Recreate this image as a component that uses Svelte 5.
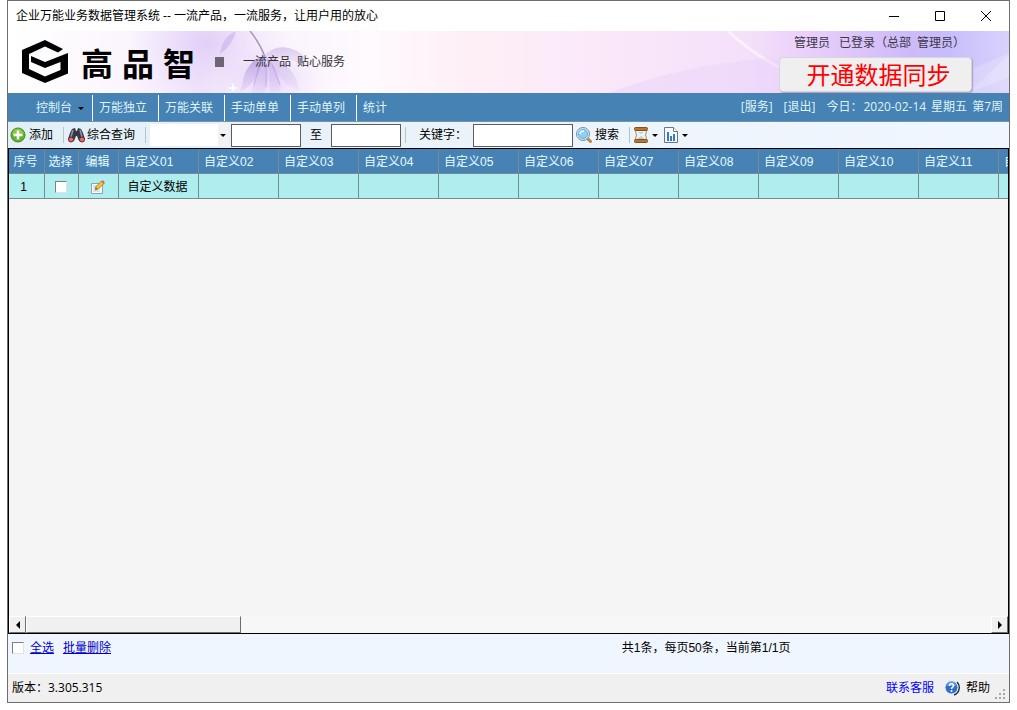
<script lang="ts">
  interface MenuItem {
    label: string;
    dropdown?: boolean;
  }

  const menu: MenuItem[] = [
    { label: '控制台', dropdown: true },
    { label: '万能独立' },
    { label: '万能关联' },
    { label: '手动单单' },
    { label: '手动单列' },
    { label: '统计' }
  ];

  const fields = Array.from({ length: 12 }, (_, i) => '自定义' + String(i + 1).padStart(2, '0'));

  let rows = $state([{ id: 1, checked: false, values: ['自定义数据'] }]);
  let from = $state('');
  let to = $state('');
  let keyword = $state('');

  let allChecked = $derived(rows.every((r) => r.checked));

  function toggleAll() {
    const next = !allChecked;
    rows.forEach((r) => (r.checked = next));
  }
</script>

<div class="window">
  <header class="titlebar">
    <span class="title">企业万能业务数据管理系统 -- 一流产品，一流服务，让用户用的放心</span>
    <div class="controls">
      <button aria-label="最小化">
        <svg width="12" height="12" viewBox="0 0 12 12"><path d="M1 6.500h10" /></svg>
      </button>
      <button aria-label="最大化">
        <svg width="12" height="12" viewBox="0 0 12 12"><path d="M1.500 1.500h9v9h-9z" /></svg>
      </button>
      <button aria-label="关闭">
        <svg width="12" height="12" viewBox="0 0 12 12"><path d="M1 1l10 10M11 1L1 11" /></svg>
      </button>
    </div>
  </header>

  <div class="banner">
    <svg class="art" viewBox="0 0 1001 62" preserveAspectRatio="xMinYMin slice" aria-hidden="true">
      <defs>
        <linearGradient id="petal" x1="0" y1="0" x2="0" y2="1">
          <stop offset="0" stop-color="#a88adb" stop-opacity="0.75" />
          <stop offset="1" stop-color="#dcc8f4" stop-opacity="0.4" />
        </linearGradient>
        <radialGradient id="glow">
          <stop offset="0" stop-color="#d8c0f4" stop-opacity="0.6" />
          <stop offset="1" stop-color="#e8d8fa" stop-opacity="0" />
        </radialGradient>
      </defs>
      <ellipse cx="200" cy="12" rx="80" ry="60" fill="url(#glow)" />
      <ellipse cx="262" cy="48" rx="56" ry="36" fill="url(#glow)" />
      <path d="M228 0q-14 6-16 23q12-8 16-23z" fill="#cdb6ee" opacity="0.7" />
      <path d="M242 0q10 12 15 26" fill="none" stroke="#a995bd" stroke-width="1.500" />
      <path d="M255 26q14-16 34-6q14 8 6 16q-12-12-40-10z" fill="url(#petal)" opacity="0.5" />
      <path d="M256 25q-14 3-20 20q-2 10-4 16q12-6 18-18z" fill="url(#petal)" />
      <path d="M256 25q-10 18-12 37h12q8-20 0-37z" fill="url(#petal)" opacity="0.8" />
      <path d="M258 26q14 12 15 34l-11 2q0-18-4-36z" fill="url(#petal)" opacity="0.7" />
      <path d="M260 26q26 6 32 34q-20-6-32-34z" fill="url(#petal)" opacity="0.5" />
      <path d="M252 34l-6 20M258 34v22M264 34l8 20" stroke="#a88ad0" stroke-width="0.800" opacity="0.5" />
      <path d="M225 51l1 5l5 1l-5 1l-1 4l-1-4l-5-1l5-1z" fill="#fff" />
      <path d="M720 0q30 28 64 42" stroke="#fff" stroke-width="3" fill="none" opacity="0.55" />
      <path d="M600 62q80-30 175-36v36z" fill="#ead4fa" opacity="0.5" />
      <path d="M937 50l64-28v40h-90z" fill="#fff" opacity="0.2" />
      <path d="M960 62l41-16v-22z" fill="#fff" opacity="0.2" />
    </svg>
    <svg class="logo" width="48" height="46" viewBox="0 0 48 46" role="img" aria-label="高品智">
      <path
        d="M24 1L42 10L37 13.500L24 7.500L8 15v15l16 7.500l15.500-6.500v-8L24 29L10 23v-6l14 6l23-9v20.500L24 44L1 34V11z"
        fill="#000"
      />
    </svg>
    <strong class="brand"><span>高</span><span>品</span><span>智</span></strong>
    <span class="square"></span>
    <span class="slogan">一流产品&ensp;贴心服务</span>
    <div class="account">
      <span class="login">管理员&ensp; 已登录（总部&ensp;管理员）</span>
      <button class="sync">开通数据同步</button>
    </div>
  </div>

  <nav class="menu">
    {#each menu as item}
      <button class="menu-item">
        {item.label}{#if item.dropdown}<i class="caret"></i>{/if}
      </button>
    {/each}
    <div class="session">
      <a href="#service">[服务]</a>
      <a href="#logout">[退出]</a>
      <span class="today">
        <span>今日：</span>
        <span>2020-02-14</span>
        <span>星期五</span>
        <span>第7周</span>
      </span>
    </div>
  </nav>

  <div class="toolbar">
    <button class="tool">
      <svg width="16" height="16" viewBox="0 0 16 16">
        <circle cx="8" cy="8" r="7" fill="#62b32b" stroke="#3f8a1c" />
        <path d="M2.500 7a5.500 5.500 0 0 1 11 0z" fill="#9ad25c" opacity="0.7" />
        <path d="M8 3.500v9M3.500 8h9" stroke="#fff" stroke-width="2.500" />
      </svg>
      添加
    </button>
    <span class="sep"></span>
    <button class="tool binoculars">
      <svg width="17" height="16" viewBox="0 0 17 16">
        <path d="M4 2l3-1l1 3h1l1-3l3 1l2 4l2 6q-1 4-6 2L9 9H8l-2 5q-5 2-6-2l2-6z" fill="#343946" />
        <path d="M5 3L3 10M12 3l2 7" stroke="#8d96aa" stroke-width="1.500" />
        <ellipse cx="3" cy="12.500" rx="2.500" ry="2.500" fill="#e0716a" stroke="#6b2422" />
        <ellipse cx="14" cy="12.500" rx="2.500" ry="2.500" fill="#e0716a" stroke="#6b2422" />
      </svg>
      综合查询
    </button>
    <span class="sep"></span>
    <div class="combo">
      <select aria-label="查询字段"><option></option></select>
      <i class="caret"></i>
    </div>
    <input class="range" type="text" aria-label="起始" bind:value={from} />
    <label class="to" for="range-to">至</label>
    <input class="range" id="range-to" type="text" bind:value={to} />
    <span class="sep"></span>
    <label class="kw" for="keyword">关键字：</label>
    <input class="keyword" id="keyword" type="text" bind:value={keyword} />
    <button class="tool search">
      <svg width="16" height="16" viewBox="0 0 16 16">
        <path d="M12 12l2.500 2.500" stroke="#b98a3c" stroke-width="3" stroke-linecap="round" />
        <circle cx="7" cy="7" r="6.500" fill="#c9e9f9" stroke="#6f8fb0" />
        <circle cx="7" cy="7" r="4.500" fill="#8fd0f2" stroke="#6fa9d2" />
        <path d="M4 7q0-3 4-3" stroke="#fff" stroke-width="1.500" fill="none" />
      </svg>
      搜索
    </button>
    <span class="sep"></span>
    <button class="tool drop" aria-label="历史">
      <svg width="14" height="16" viewBox="0 0 14 16">
        <path d="M1.500 3q0 3 1 5q-1 2-1 5h11q0-3-1-5q1-2 1-5z" fill="#eef2f8" stroke="#b98b50" />
        <path d="M3 12l4-3l4 3zM4 5h6L7 7z" fill="#b9cbe2" />
        <rect x="0.500" y="0.500" width="13" height="3" rx="1" fill="#b5772e" stroke="#875017" />
        <rect x="0.500" y="12.500" width="13" height="3" rx="1" fill="#b5772e" stroke="#875017" />
      </svg>
      <i class="caret"></i>
    </button>
    <button class="tool drop" aria-label="报表">
      <svg width="14" height="16" viewBox="0 0 14 16">
        <path d="M0.500 0.500h9l4 4v11h-13z" fill="#f4f8fd" stroke="#6d7683" />
        <path d="M9.500 0.500v4h4" fill="#fff" stroke="#6d7683" />
        <path d="M3 5h2v9H3zM6 9h2v5H6zM9 7h2v7H9z" fill="#3b78c4" />
      </svg>
      <i class="caret"></i>
    </button>
  </div>

  <main class="grid">
    <div class="viewport">
      <table>
        <thead>
          <tr>
            <th class="no">序号</th>
            <th class="pick">选择</th>
            <th class="edit">编辑</th>
            {#each fields as field}
              <th class="field">{field}</th>
            {/each}
          </tr>
        </thead>
        <tbody>
          {#each rows as row}
            <tr>
              <td class="num">{row.id}</td>
              <td><input type="checkbox" aria-label="选择第{row.id}行" bind:checked={row.checked} /></td>
              <td>
                <button class="tool pencil" aria-label="编辑">
                  <svg width="14" height="14" viewBox="0 0 14 14">
                    <path d="M0.500 3.500h11v10h-11z" fill="#fff" stroke="#86a6b8" />
                    <path d="M2 6h5M2 8h3M2 11h7" stroke="#b8c8d4" />
                    <path d="M4 10l1-3.500L10.500 1l2.500 2.500L7.500 9z" fill="#f4c13a" stroke="#a5762b" stroke-width="0.800" />
                    <path d="M10 1.500l1-1h1.500L13.500 2v1l-1 1z" fill="#e0685c" />
                    <path d="M5 7l2 2l-3 1z" fill="#5c9a3c" />
                  </svg>
                </button>
              </td>
              {#each fields as _, i}
                <td>{row.values[i] ?? ''}</td>
              {/each}
            </tr>
          {/each}
        </tbody>
      </table>
    </div>
    <div class="scrollbar">
      <button class="arrow" aria-label="向左">
        <svg width="4" height="8" viewBox="0 0 4 8"><path d="M4 0v8L0 4z" /></svg>
      </button>
      <div class="thumb"></div>
      <button class="arrow right" aria-label="向右">
        <svg width="4" height="8" viewBox="0 0 4 8"><path d="M0 0v8l4-4z" /></svg>
      </button>
    </div>
  </main>

  <div class="pager">
    <div class="bulk">
      <input id="all" type="checkbox" checked={allChecked} onchange={toggleAll} />
      <label for="all">全选</label>
      <a href="#delete">批量删除</a>
    </div>
    <span class="summary">共1条，每页50条，当前第1/1页</span>
  </div>

  <footer class="status">
    <span>版本：3.305.315</span>
    <div class="support">
      <a href="#contact">联系客服</a>
      <button class="tool help">
        <svg width="16" height="16" viewBox="0 0 16 16">
          <path d="M13 2a8 8 0 0 1-3 13" stroke="#222b3c" stroke-width="1.500" fill="none" />
          <circle cx="7.500" cy="7.500" r="6.500" fill="#2f6fc9" stroke="#dfe8f5" />
          <path d="M2.500 6a5 5 0 0 1 10 0z" fill="#7eb0ee" opacity="0.6" />
          <path d="M5.500 6q0-2.200 2-2.200t2 1.900q0 1-1.200 1.600q-0.800 0.500-0.800 1.700" stroke="#fff" stroke-width="1.500" fill="none" />
          <circle cx="7.500" cy="11" r="1" fill="#fff" />
        </svg>
        帮助
      </button>
    </div>
    <svg class="grip" width="11" height="11" viewBox="0 0 11 11" aria-hidden="true">
      <path d="M8 0h2v2H8zM4 4h2v2H4zM8 4h2v2H8zM0 8h2v2H0zM4 8h2v2H4zM8 8h2v2H8z" fill="#a8a8a8" />
    </svg>
  </footer>
</div>

<style>
  :global(body) {
    background: #fff;
  }

  .window {
    box-sizing: border-box;
    display: flex;
    flex-direction: column;
    min-height: calc(100vh - 7px);
    margin: 0 7px 7px;
    border: 1px solid #6e6e6e;
    font: 12px/16px 'Open Sans', 'Noto Sans CJK SC', sans-serif;
    color: #000;
  }

  button,
  input,
  select {
    margin: 0;
    font: inherit;
    color: inherit;
  }

  button {
    padding: 0;
    border: 0;
    background: none;
    white-space: nowrap;
  }

  svg {
    display: block;
    flex: none;
  }

  .titlebar {
    display: flex;
    align-items: center;
    justify-content: space-between;
    height: 30px;
    padding-left: 8px;
  }

  .controls {
    display: flex;
    height: 100%;
  }

  .controls button {
    display: grid;
    place-items: center;
    width: 46px;
  }

  .controls path {
    fill: none;
    stroke: #000;
  }

  .banner {
    position: relative;
    display: flex;
    align-items: center;
    height: 62px;
    padding-left: 13px;
    background: linear-gradient(
      90deg,
      #fff 0,
      #fbf5fe 12%,
      #efe3fb 19%,
      #f9f2fd 25%,
      #fefafe 36%,
      #feeff6 46%,
      #fae8f9 60%,
      #f4e0fa 74%,
      #e9cffb 80%,
      #cdbaf8 90%,
      #c8bdfb 94%,
      #d9d2fc 100%
    );
  }

  .art {
    position: absolute;
    inset: 0;
    width: 100%;
    height: 100%;
  }

  .logo,
  .brand,
  .square,
  .slogan,
  .account {
    position: relative;
  }

  .brand {
    display: flex;
    gap: 9px;
    margin-left: 12px;
    font-size: 32px;
    line-height: 40px;
    font-family: 'Noto Sans CJK SC', sans-serif;
  }

  .square {
    width: 9px;
    height: 10px;
    margin-left: 20px;
    background: #6d6672;
  }

  .slogan {
    margin-left: 19px;
    color: #333;
  }

  .account {
    align-self: flex-start;
    display: flex;
    flex-direction: column;
    gap: 6px;
    height: 62px;
    margin-left: auto;
    margin-right: 37px;
    padding-top: 4px;
    box-sizing: border-box;
    color: #3b3547;
  }

  .login {
    padding-left: 15px;
  }

  .sync {
    box-sizing: border-box;
    width: 193px;
    height: 35px;
    padding-left: 6px;
    border: 1px solid #d9d3e2;
    border-radius: 4px;
    background: #f0eff0;
    box-shadow: 1px 1px 1px #a9a1b8;
    font-size: 24px;
    line-height: 32px;
    color: #f00;
  }

  .menu {
    position: relative;
    display: flex;
    height: 28px;
    border-bottom: 1px solid #6f94b2;
    background: #4682b4;
    color: #dff4fa;
  }

  .menu-item {
    box-sizing: border-box;
    width: 66px;
    margin-top: 2px;
    padding-left: 6px;
    border-left: 1px solid #fff;
    text-align: left;
  }

  .menu-item:first-child {
    display: flex;
    align-items: center;
    gap: 6px;
    width: 84px;
    padding-left: 28px;
    border-left: 0;
  }

  .caret {
    width: 0;
    height: 0;
    border: 3px solid transparent;
    border-top-color: #000;
    border-bottom: 0;
  }

  .session {
    display: flex;
    align-items: center;
    gap: 11px;
    margin-left: auto;
    padding-right: 6px;
    white-space: nowrap;
  }

  .session a {
    color: inherit;
    text-decoration: none;
  }

  .today {
    display: flex;
    gap: 5px;
  }

  .today span:first-child {
    margin-right: -4px;
  }

  .toolbar {
    display: flex;
    align-items: center;
    height: 26px;
    padding-left: 2px;
    background: linear-gradient(90deg, #e3eff7, #eef4fb 60%, #f0f6ff);
  }

  .tool {
    display: flex;
    align-items: center;
    gap: 3px;
  }

  .binoculars {
    gap: 2px;
  }

  .sep {
    width: 1px;
    height: 16px;
    margin: 0 4px 0 10px;
    background: #b8c4cc;
  }

  .combo {
    position: relative;
    width: 79px;
    height: 22px;
  }

  .combo select {
    appearance: none;
    width: 100%;
    height: 100%;
    border: 0;
    border-right: 11px solid #f2f2f2;
    border-radius: 0;
    background: #fff;
  }

  .combo .caret {
    position: absolute;
    right: 3px;
    top: 10px;
    pointer-events: none;
  }

  input[type='text'] {
    box-sizing: border-box;
    height: 23px;
    padding: 2px 4px;
    border: 1px solid #5c5c5c;
    border-radius: 0;
    background: #fff;
  }

  .range {
    width: 70px;
  }

  .combo + .range {
    margin-left: 2px;
  }

  .to {
    margin: 0 9px;
  }

  .range + .sep {
    margin-left: 4px;
    margin-right: 13px;
  }

  .kw {
    margin-right: 6px;
  }

  .keyword {
    width: 100px;
  }

  .search {
    margin-left: 3px;
  }

  .drop {
    gap: 4px;
    margin-right: 6px;
  }

  .grid {
    flex: 1;
    display: flex;
    flex-direction: column;
    border: 1px solid #000;
    background: #f5f5f5;
  }

  .viewport {
    flex: 1;
    overflow: hidden;
    width: 0;
    min-width: 100%;
  }

  table {
    table-layout: fixed;
    width: 1070px;
    border-collapse: separate;
    border-spacing: 0;
  }

  .no {
    width: 36px;
  }

  .pick {
    width: 34px;
  }

  .edit {
    width: 40px;
  }

  .field {
    width: 80px;
  }

  th,
  td {
    box-sizing: border-box;
    height: 25px;
    padding: 1px 2px 0 0;
    border-right: 1px solid #7b8a8d;
    border-bottom: 1px solid #7b8a8d;
    text-align: center;
    white-space: nowrap;
    font-family: 'Liberation Sans', 'Noto Sans CJK SC', sans-serif;
  }

  th {
    background: #4682b4;
    color: #e6fbff;
    font-weight: 400;
  }

  th.field {
    padding-left: 5px;
    text-align: left;
  }

  td {
    background: #afeeee;
  }

  td.num {
    padding-right: 6px;
  }

  .pencil {
    margin: 0 auto;
  }

  input[type='checkbox'] {
    appearance: none;
    display: block;
    box-sizing: border-box;
    width: 12px;
    height: 12px;
    border: 1px solid #e3e3e3;
    border-top-color: #808080;
    border-left-color: #808080;
    background: #fff;
  }

  input[type='checkbox']:checked {
    background: #4682b4;
  }

  td input[type='checkbox'] {
    margin: 0 auto;
  }

  .scrollbar {
    display: flex;
    height: 17px;
    background: #f7f7f7;
  }

  .arrow,
  .thumb {
    box-sizing: border-box;
    border: 1px solid #fff;
    border-right-color: #6e6e6e;
    border-bottom-color: #6e6e6e;
    background: #f0f0f0;
  }

  .arrow {
    display: grid;
    place-items: center;
    width: 17px;
  }

  .right {
    margin-left: auto;
  }

  .thumb {
    width: 21.5%;
  }

  .pager {
    display: flex;
    height: 39px;
    padding: 0 4px;
    background: #f0f6ff;
    border-bottom: 1px solid #fff;
  }

  .bulk {
    flex: 1;
    display: flex;
    align-items: center;
    height: 28px;
  }

  .bulk label {
    margin: 0 9px 0 6px;
  }

  .bulk label,
  .bulk a {
    color: #0000c8;
    text-decoration: underline;
  }

  .summary {
    flex: none;
    box-sizing: border-box;
    width: 39%;
    padding-left: 4px;
    line-height: 28px;
    font-family: 'Liberation Sans', 'Noto Sans CJK SC', sans-serif;
  }

  .status {
    display: flex;
    align-items: center;
    height: 28px;
    padding-left: 4px;
    background: #f0f0f0;
  }

  .support {
    display: flex;
    align-items: center;
    gap: 10px;
    margin-left: auto;
  }

  .support a {
    color: #00f;
    text-decoration: none;
  }

  .help {
    gap: 6px;
  }

  .grip {
    align-self: flex-end;
    margin: 0 3px 2px 5px;
  }
</style>
